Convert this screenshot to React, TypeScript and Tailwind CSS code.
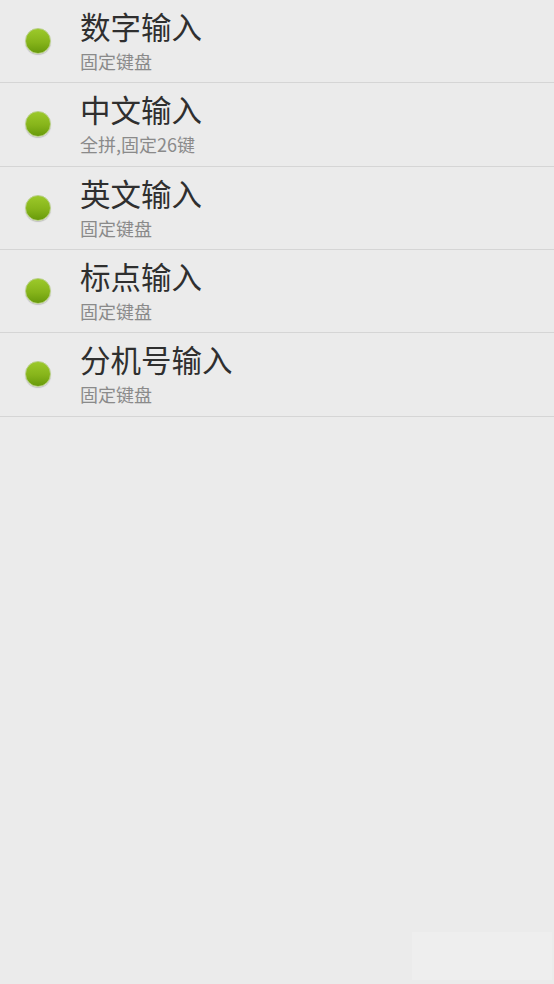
const modes = [
  { title: "数字输入", hint: "固定键盘" },
  { title: "中文输入", hint: "全拼,固定26键" },
  { title: "英文输入", hint: "固定键盘" },
  { title: "标点输入", hint: "固定键盘" },
  { title: "分机号输入", hint: "固定键盘" },
];

function Dot() {
  return (
    <span className="mt-[28px] block h-[26px] w-[26px] shrink-0 rounded-full border border-[#b7cf83] bg-[linear-gradient(to_bottom,#9cc92a,#86b41a_55%,#689a0b)] shadow-[0_1px_1px_rgba(0,0,0,0.18)]" />
  );
}

export default function App() {
  return (
    <div
      className="relative min-h-[984px] w-full bg-[#ebebeb]"
      style={{ fontFamily: '"Noto Sans CJK SC", "Noto Sans", sans-serif' }}
    >
      <ul>
        {modes.map((mode) => (
          <li key={mode.title} className="flex h-[83.33px] border-b border-[#d5d5d5] pl-[25px]">
            <Dot />
            <div className="ml-[29px] flex flex-col pt-[8px]">
              <span className="text-[30.5px] leading-[36px] text-[#2f2f2f]">{mode.title}</span>
              <span className="mt-[6px] text-[18px] leading-[22px] text-[#8a8a8a]">{mode.hint}</span>
            </div>
          </li>
        ))}
      </ul>
      <div className="absolute bottom-[4px] right-[2px] h-[48px] w-[140px] bg-[#eeeeee]" />
    </div>
  );
}
